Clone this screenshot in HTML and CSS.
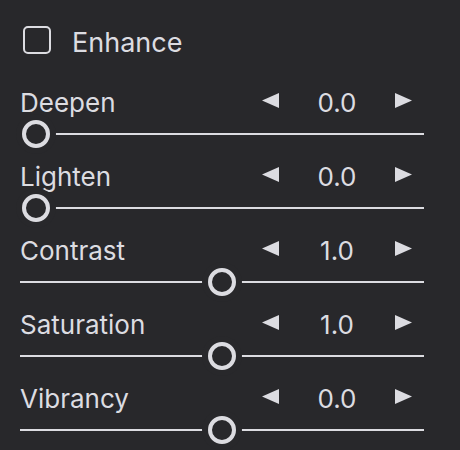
FILE: index.html
```html
<!DOCTYPE html>
<html>
<head>
<meta charset="utf-8">
<link rel="stylesheet" href="styles.css">
</head>
<body>
<div class="panel">
  <div class="enhance">
    <span class="checkbox"></span>
    <span class="enhance-label">Enhance</span>
  </div>

  <div class="row">
    <div class="header">
      <span class="label">Deepen</span>
      <div class="stepper">
        <svg class="arrow" width="17" height="15" viewBox="0 0 17 15"><polygon points="0,7.5 17,0 17,15"/></svg>
        <span class="value">0.0</span>
        <svg class="arrow" width="17" height="15" viewBox="0 0 17 15"><polygon points="17,7.5 0,0 0,15"/></svg>
      </div>
    </div>
    <div class="slider"><div class="track"></div><div class="thumb" style="--f:0"></div></div>
  </div>

  <div class="row">
    <div class="header">
      <span class="label">Lighten</span>
      <div class="stepper">
        <svg class="arrow" width="17" height="15" viewBox="0 0 17 15"><polygon points="0,7.5 17,0 17,15"/></svg>
        <span class="value">0.0</span>
        <svg class="arrow" width="17" height="15" viewBox="0 0 17 15"><polygon points="17,7.5 0,0 0,15"/></svg>
      </div>
    </div>
    <div class="slider"><div class="track"></div><div class="thumb" style="--f:0"></div></div>
  </div>

  <div class="row">
    <div class="header">
      <span class="label">Contrast</span>
      <div class="stepper">
        <svg class="arrow" width="17" height="15" viewBox="0 0 17 15"><polygon points="0,7.5 17,0 17,15"/></svg>
        <span class="value">1.0</span>
        <svg class="arrow" width="17" height="15" viewBox="0 0 17 15"><polygon points="17,7.5 0,0 0,15"/></svg>
      </div>
    </div>
    <div class="slider"><div class="track"></div><div class="thumb" style="--f:0.5"></div></div>
  </div>

  <div class="row">
    <div class="header">
      <span class="label">Saturation</span>
      <div class="stepper">
        <svg class="arrow" width="17" height="15" viewBox="0 0 17 15"><polygon points="0,7.5 17,0 17,15"/></svg>
        <span class="value">1.0</span>
        <svg class="arrow" width="17" height="15" viewBox="0 0 17 15"><polygon points="17,7.5 0,0 0,15"/></svg>
      </div>
    </div>
    <div class="slider"><div class="track"></div><div class="thumb" style="--f:0.5"></div></div>
  </div>

  <div class="row">
    <div class="header">
      <span class="label">Vibrancy</span>
      <div class="stepper">
        <svg class="arrow" width="17" height="15" viewBox="0 0 17 15"><polygon points="0,7.5 17,0 17,15"/></svg>
        <span class="value">0.0</span>
        <svg class="arrow" width="17" height="15" viewBox="0 0 17 15"><polygon points="17,7.5 0,0 0,15"/></svg>
      </div>
    </div>
    <div class="slider"><div class="track"></div><div class="thumb" style="--f:0.5"></div></div>
  </div>
</div>
</body>
</html>
```

FILE: styles.css
```css
html, body {
  margin: 0;
  padding: 0;
  background: #28282b;
}
body {
  width: 460px;
  height: 450px;
  overflow: hidden;
  font-family: Inter, "Noto Sans", sans-serif;
  color: #dcdce1;
}
.panel {
  width: 404px;
  padding: 26px 0 0 20px;
}
.enhance {
  display: flex;
  align-items: flex-start;
  gap: 21px;
  margin-left: 3px;
  margin-bottom: 34px;
  height: 28px;
}
.checkbox {
  width: 28px;
  height: 28px;
  box-sizing: border-box;
  border: 2px solid #dcdce1;
  border-radius: 5px;
  flex: none;
}
.enhance-label {
  font-size: 27px;
  line-height: 28px;
  margin-top: 3px;
}
.row {
  margin-bottom: 14px;
}
.header {
  display: flex;
  justify-content: space-between;
  align-items: center;
  height: 30px;
  margin-bottom: 2px;
  padding-right: 12px;
}
.label {
  font-size: 26px;
  line-height: 30px;
  margin-left: 0;
}
.stepper {
  width: 150px;
  display: grid;
  grid-template-columns: 17px 1fr 17px;
  align-items: center;
}
.arrow {
  display: block;
  fill: #dcdce1;
  margin-bottom: 5px;
}
.value {
  font-size: 26px;
  line-height: 30px;
  text-align: center;
}
.slider {
  position: relative;
  height: 28px;
  box-sizing: border-box;
  padding-top: 13px;
}
.track {
  height: 2px;
  background: #dcdce1;
}
.thumb {
  position: absolute;
  top: 0;
  left: calc(2px + var(--f) * (100% - 32px));
  width: 28px;
  height: 28px;
  box-sizing: border-box;
  border: 4px solid #dcdce1;
  border-radius: 50%;
  background: #28282b;
  box-shadow: 0 0 0 6px #28282b;
}
```
